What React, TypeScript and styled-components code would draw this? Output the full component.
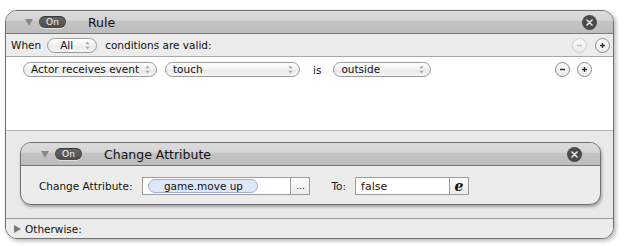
import React from "react";
import styled, { createGlobalStyle } from "styled-components";

const Global = createGlobalStyle`
  html, body { margin: 0; padding: 0; background: #ffffff; }
  body { font-family: "DejaVu Sans", Verdana, sans-serif; font-size: 10.5px; color: #111; }
  * { box-sizing: border-box; }
`;

const Page = styled.div`
  width: 628px;
  height: 246px;
  padding: 10px 0 0 5px;
`;

const Panel = styled.div`
  width: 609px;
  height: 229px;
  border: 1px solid #6f6f6f;
  border-radius: 12px;
  overflow: hidden;
  background: #ececec;
  box-shadow: 2px 2px 4px rgba(0, 0, 0, 0.28);
  display: flex;
  flex-direction: column;
`;

const Header = styled.div<{ $inner?: boolean }>`
  flex: 0 0 23px;
  height: 23px;
  display: flex;
  align-items: center;
  padding: 0 ${(p) => (p.$inner ? 18 : 16)}px 0 ${(p) => (p.$inner ? 20 : 19)}px;
  background: linear-gradient(#dcdcdc 0%, #d4d4d4 42%, #c3c3c3 46%, #bdbdbd 100%);
  border-bottom: 1px solid #7a7a7a;
`;

const Disclosure = styled.span<{ $open?: boolean; $color?: string }>`
  width: 0;
  height: 0;
  flex: 0 0 auto;
  ${(p) =>
    p.$open
      ? `border-left: 4px solid transparent; border-right: 4px solid transparent; border-top: 7px solid ${p.$color || "#8a8a8a"};`
      : `border-top: 4px solid transparent; border-bottom: 4px solid transparent; border-left: 7px solid ${p.$color || "#7a7a7a"};`}
`;

const OnPill = styled.span`
  margin-left: 6px;
  width: 27px;
  height: 12px;
  border-radius: 6px;
  background: linear-gradient(#6a6a6a, #4a4a4a);
  box-shadow: inset 0 1px 1px rgba(0, 0, 0, 0.5), 0 1px 0 rgba(255, 255, 255, 0.5);
  color: #f4f4f4;
  font-size: 9px;
  line-height: 12px;
  text-align: center;
`;

const Title = styled.span`
  margin-left: 22px;
  font-size: 12.5px;
  color: #111;
  flex: 1;
  padding-top: 1px;
`;

const CloseButton = styled.span`
  width: 15px;
  height: 15px;
  border-radius: 50%;
  background: #4a4a4a;
  display: flex;
  align-items: center;
  justify-content: center;
`;

const WhenRow = styled.div`
  flex: 0 0 23px;
  display: flex;
  align-items: center;
  padding: 0 3px 0 5px;
  background: #ececec;
  border-bottom: 1px solid #a8a8a8;
`;

const Label = styled.span<{ $ml?: number }>`
  margin-left: ${(p) => p.$ml ?? 0}px;
  white-space: nowrap;
`;

const Popup = styled.span<{ $w: number; $ml?: number; $center?: boolean }>`
  margin-left: ${(p) => p.$ml ?? 0}px;
  width: ${(p) => p.$w}px;
  height: 15px;
  border: 1px solid #9a9a9a;
  border-radius: 8px;
  background: linear-gradient(#ffffff, #f1f1f1 50%, #e8e8e8 51%, #f6f6f6);
  display: flex;
  align-items: center;
  padding: 0 6px 0 ${(p) => (p.$center ? 0 : 7)}px;
  justify-content: space-between;
  line-height: 13px;
`;

const PopupText = styled.span<{ $center?: boolean }>`
  flex: 1;
  text-align: ${(p) => (p.$center ? "center" : "left")};
`;

const Spacer = styled.span`
  flex: 1;
`;

const RoundButton = styled.span<{ $disabled?: boolean; $ml?: number }>`
  margin-left: ${(p) => p.$ml ?? 0}px;
  width: 15px;
  height: 15px;
  border-radius: 50%;
  border: 1px solid ${(p) => (p.$disabled ? "#c4c4c4" : "#8a8a8a")};
  background: linear-gradient(#ffffff, #ececec);
  display: flex;
  align-items: center;
  justify-content: center;
  opacity: ${(p) => (p.$disabled ? 0.75 : 1)};
`;

const Conditions = styled.div`
  flex: 0 0 74px;
  background: #ffffff;
  border-bottom: 1px solid #b4b4b4;
  padding: 5px 21px 0 17px;
`;

const ConditionRow = styled.div`
  display: flex;
  align-items: center;
  height: 15px;
`;

const Actions = styled.div`
  flex: 0 0 88px;
  background: #e9e9e9;
  border-bottom: 1px solid #999999;
  padding: 11px 12px 0 14px;
`;

const InnerPanel = styled.div`
  height: 63px;
  border: 1px solid #6f6f6f;
  border-radius: 11px;
  overflow: hidden;
  background: #ececec;
  box-shadow: 1px 2px 3px rgba(0, 0, 0, 0.3);
  display: flex;
  flex-direction: column;
`;

const InnerBody = styled.div`
  flex: 1;
  display: flex;
  align-items: center;
  padding: 1px 0 0 18px;
`;

const Field = styled.span<{ $w: number; $ml?: number }>`
  margin-left: ${(p) => p.$ml ?? 0}px;
  width: ${(p) => p.$w}px;
  height: 18px;
  border: 1px solid #9c9c9c;
  background: #ffffff;
  display: flex;
  align-items: center;
  padding: 0 5px;
`;

const FieldText = styled.span`
  color: #2a1208;
  font-size: 11px;
  padding-top: 1px;
`;

const Token = styled.span`
  width: 110px;
  height: 14px;
  border: 1px solid #9db0d4;
  border-radius: 7px;
  background: #dde7f8;
  text-align: center;
  line-height: 12px;
  font-size: 10.5px;
`;

const SideButton = styled.span`
  width: 19px;
  height: 18px;
  border: 1px solid #9c9c9c;
  border-left: none;
  background: linear-gradient(#fbfbfb, #ececec);
  display: flex;
  align-items: center;
  justify-content: center;
  font-size: 9px;
  line-height: 18px;
`;

const ExprGlyph = styled.span`
  font-family: "DejaVu Serif", serif;
  font-weight: bold;
  font-style: italic;
  font-size: 14px;
  line-height: 16px;
  color: #111;
`;

const OtherwiseRow = styled.div`
  flex: 1;
  display: flex;
  align-items: center;
  padding: 0 0 0 8px;
  background: #ececec;
`;

const Arrows = () => (
  <svg width="5" height="9" viewBox="0 0 5 9">
    <path d="M2.5 0.5 L4.5 3.3 H0.5 Z" fill="#a8a8a8" />
    <path d="M2.5 8.5 L4.5 5.7 H0.5 Z" fill="#a8a8a8" />
  </svg>
);

const CloseIcon = () => (
  <CloseButton>
    <svg width="7" height="7" viewBox="0 0 7 7">
      <path d="M1 1 L6 6 M6 1 L1 6" stroke="#e6e6e6" strokeWidth="1.6" strokeLinecap="round" />
    </svg>
  </CloseButton>
);

const Minus = ({ disabled, ml }: { disabled?: boolean; ml?: number }) => (
  <RoundButton $disabled={disabled} $ml={ml}>
    <svg width="7" height="7" viewBox="0 0 7 7">
      <path d="M1 3.5 H6" stroke={disabled ? "#b0b0b0" : "#333"} strokeWidth="1.4" />
    </svg>
  </RoundButton>
);

const Plus = ({ ml }: { ml?: number }) => (
  <RoundButton $ml={ml}>
    <svg width="7" height="7" viewBox="0 0 7 7">
      <path d="M1 3.5 H6 M3.5 1 V6" stroke="#333" strokeWidth="1.4" />
    </svg>
  </RoundButton>
);

export default function App() {
  return (
    <Page>
      <Global />
      <Panel>
        <Header>
          <Disclosure $open />
          <OnPill>On</OnPill>
          <Title>Rule</Title>
          <CloseIcon />
        </Header>
        <WhenRow>
          <Label>When</Label>
          <Popup $w={50} $ml={6} $center>
            <PopupText $center>All</PopupText>
            <Arrows />
          </Popup>
          <Label $ml={8}>conditions are valid:</Label>
          <Spacer />
          <Minus disabled />
          <Plus ml={8} />
        </WhenRow>
        <Conditions>
          <ConditionRow>
            <Popup $w={134}>
              <PopupText>Actor receives event</PopupText>
              <Arrows />
            </Popup>
            <Popup $w={135} $ml={8}>
              <PopupText>touch</PopupText>
              <Arrows />
            </Popup>
            <Label $ml={13}>is</Label>
            <Popup $w={98} $ml={12}>
              <PopupText>outside</PopupText>
              <Arrows />
            </Popup>
            <Spacer />
            <Minus />
            <Plus ml={7} />
          </ConditionRow>
        </Conditions>
        <Actions>
          <InnerPanel>
            <Header $inner>
              <Disclosure $open />
              <OnPill>On</OnPill>
              <Title>Change Attribute</Title>
              <CloseIcon />
            </Header>
            <InnerBody>
              <Label>Change Attribute:</Label>
              <Field $w={149} $ml={10}>
                <Token>game.move up</Token>
              </Field>
              <SideButton>...</SideButton>
              <Label $ml={21}>To:</Label>
              <Field $w={95} $ml={9}>
                <FieldText>false</FieldText>
              </Field>
              <SideButton>
                <ExprGlyph>e</ExprGlyph>
              </SideButton>
            </InnerBody>
          </InnerPanel>
        </Actions>
        <OtherwiseRow>
          <Disclosure />
          <Label $ml={4}>Otherwise:</Label>
        </OtherwiseRow>
      </Panel>
    </Page>
  );
}
